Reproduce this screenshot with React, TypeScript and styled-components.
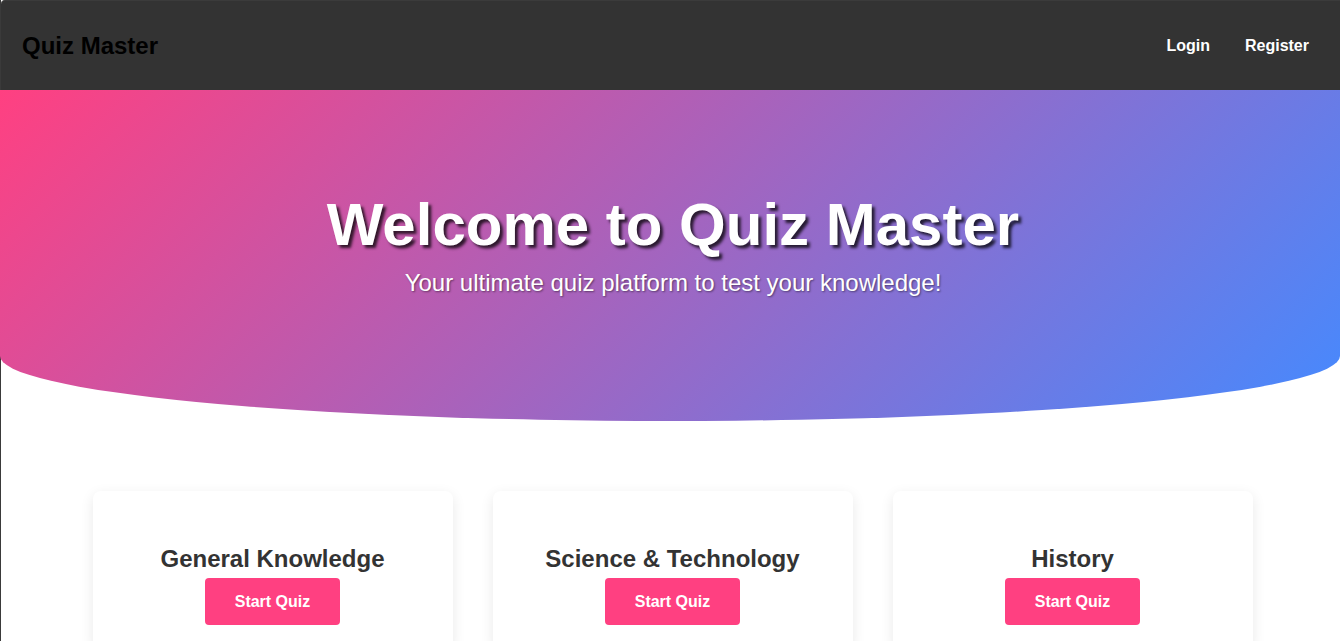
import React from "react";
import styled, { createGlobalStyle } from "styled-components";

const GlobalStyle = createGlobalStyle`
  html, body {
    margin: 0;
    padding: 0;
    overflow: hidden;
    background: #ffffff;
    font-family: "Liberation Sans", Arial, sans-serif;
  }
  * { box-sizing: border-box; }
`;

const Page = styled.div`
  min-height: 641px;
  border-left: 1px solid #3a3a3a;
  background: #ffffff;
`;

const Header = styled.header`
  height: 90px;
  background: #333333;
  border-top: 1px solid #3b3b3b;
  border-top-left-radius: 4px;
  display: flex;
  align-items: center;
  justify-content: space-between;
  padding: 0 31px 0 21px;
`;

const Logo = styled.div`
  font-size: 24px;
  font-weight: 700;
  color: #000000;
`;

const Nav = styled.nav`
  display: flex;
  gap: 35px;
`;

const NavLink = styled.a`
  font-size: 16px;
  font-weight: 700;
  color: #ffffff;
  text-decoration: none;
`;

const Hero = styled.section`
  height: 331px;
  margin-left: -1px;
  background: linear-gradient(135deg, #ff4081 0%, #448aff 100%);
  border-radius: 0 0 50% 50% / 0 0 65px 65px;
  display: flex;
  flex-direction: column;
  align-items: center;
  padding: 100px 0 0 6px;
  color: #ffffff;
`;

const HeroTitle = styled.h1`
  margin: 0;
  font-size: 60px;
  font-weight: 700;
  line-height: 69px;
  text-shadow: 3px 3px 3px rgba(0, 0, 0, 0.75);
`;

const HeroSubtitle = styled.p`
  margin: 10px 0 0;
  font-size: 24px;
  line-height: 28px;
  text-shadow: 1px 1px 2px rgba(0, 0, 0, 0.45);
`;

const Cards = styled.section`
  display: grid;
  grid-template-columns: repeat(3, 360px);
  gap: 40px;
  justify-content: center;
  padding: 70px 0 0 4px;
`;

const Card = styled.article`
  background: #ffffff;
  border-radius: 8px;
  box-shadow: 0 4px 14px rgba(0, 0, 0, 0.09);
  display: flex;
  flex-direction: column;
  align-items: center;
  padding: 54px 20px 24px;
`;

const CardTitle = styled.h3`
  margin: 0 0 5px;
  font-size: 24px;
  font-weight: 700;
  line-height: 28px;
  color: #333333;
`;

const StartButton = styled.button`
  border: none;
  border-radius: 4px;
  background: #ff4081;
  color: #ffffff;
  font-family: "Liberation Sans", Arial, sans-serif;
  font-size: 16px;
  font-weight: 700;
  line-height: 19px;
  padding: 14px 30px;
  white-space: nowrap;
  cursor: pointer;
`;

const categories = ["General Knowledge", "Science & Technology", "History"];

export default function App() {
  return (
    <>
      <GlobalStyle />
      <Page>
        <Header>
          <Logo>Quiz Master</Logo>
          <Nav>
            <NavLink href="#">Login</NavLink>
            <NavLink href="#">Register</NavLink>
          </Nav>
        </Header>
        <Hero>
          <HeroTitle>Welcome to Quiz Master</HeroTitle>
          <HeroSubtitle>Your ultimate quiz platform to test your knowledge!</HeroSubtitle>
        </Hero>
        <Cards>
          {categories.map((c) => (
            <Card key={c}>
              <CardTitle>{c}</CardTitle>
              <StartButton>Start Quiz</StartButton>
            </Card>
          ))}
        </Cards>
      </Page>
    </>
  );
}
